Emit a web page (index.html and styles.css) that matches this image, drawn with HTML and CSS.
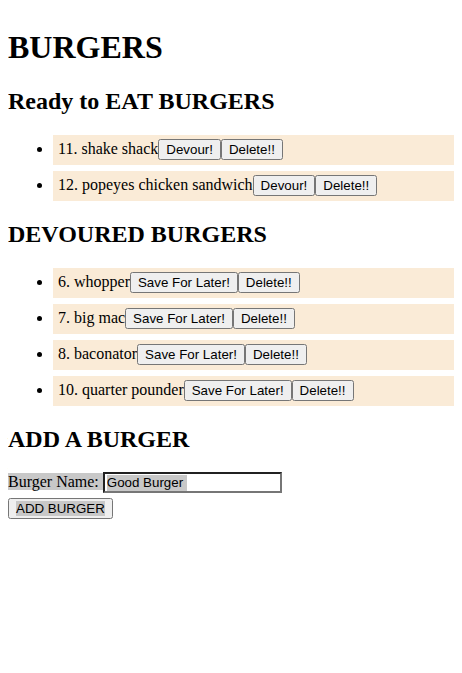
FILE: index.html
```html
<!DOCTYPE html>
<html>
<head>
<meta charset="utf-8">
<title>Burgers</title>
<link rel="stylesheet" href="styles.css">
</head>
<body>
<h1>BURGERS</h1>
<h2>Ready to EAT BURGERS</h2>
<ul class="list">
  <li class="item">11. shake shack<button class="btn">Devour!</button><button class="btn">Delete!!</button></li>
  <li class="item">12. popeyes chicken sandwich<button class="btn">Devour!</button><button class="btn">Delete!!</button></li>
</ul>
<h2>DEVOURED BURGERS</h2>
<ul class="list">
  <li class="item">6. whopper<button class="btn">Save For Later!</button><button class="btn">Delete!!</button></li>
  <li class="item">7. big mac<button class="btn">Save For Later!</button><button class="btn">Delete!!</button></li>
  <li class="item">8. baconator<button class="btn">Save For Later!</button><button class="btn">Delete!!</button></li>
  <li class="item">10. quarter pounder<button class="btn">Save For Later!</button><button class="btn">Delete!!</button></li>
</ul>
<h2>ADD A BURGER</h2>
<form class="form">
  <label class="sel" for="bn">Burger Name: </label><input class="name" id="bn" type="text" value="Good Burger"><br>
  <button class="btn add" type="button"><span class="sel">ADD BURGER</span></button>
</form>
</body>
</html>
```
FILE: styles.css
```css
body {
  font-family: "Liberation Serif", "Times New Roman", serif;
  color: #000;
  background: #fff;
}
.item {
  margin: 0 -8px 6px 5px;
  padding: 4.5px 5px;
  background: #faebd7;
}
.btn {
  font-family: "Liberation Sans", Arial, sans-serif;
  font-size: 13.33px;
}
.name {
  width: 171px;
  font-family: "Liberation Sans", Arial, sans-serif;
  font-size: 13.33px;
  background: #fff linear-gradient(#c8c8c8, #c8c8c8) no-repeat 2px 1px / 80px 16px;
}
.add {
  margin-top: 5px;
}
.sel {
  background: #c8c8c8;
}
```
